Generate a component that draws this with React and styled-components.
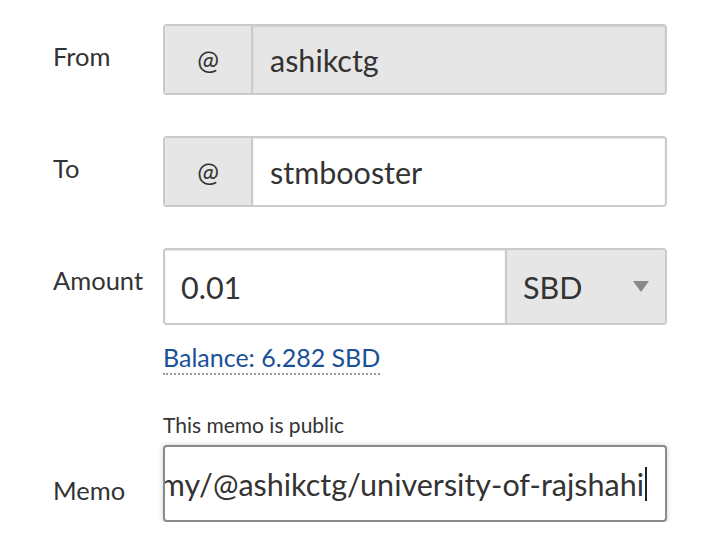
import React from "react";
import styled, { createGlobalStyle } from "styled-components";

const Global = createGlobalStyle`
  html, body { margin: 0; padding: 0; background: #fff; }
  body { font-family: "Lato", "Noto Sans", sans-serif; color: #333; }
`;

const Form = styled.div`
  padding: 24px 0 0 53px;
  width: 614px;
`;

const Row = styled.div`
  display: grid;
  grid-template-columns: 110px 504px;
  margin-bottom: ${(p) => p.$gap ?? 41}px;
`;

const Label = styled.div`
  font-size: 25.5px;
  line-height: 30px;
  padding-top: ${(p) => p.$top ?? 17}px;
  align-self: ${(p) => (p.$end ? "end" : "start")};
  padding-bottom: ${(p) => p.$bottom ?? 0}px;
`;

const Group = styled.div`
  display: flex;
  height: ${(p) => p.$h ?? 71}px;
  box-sizing: border-box;
  border: 2px solid #cacaca;
  border-radius: 4px;
  overflow: hidden;
`;

const Addon = styled.div`
  width: 86px;
  flex: none;
  background: #e6e6e6;
  border-right: 2px solid #cacaca;
  display: flex;
  align-items: center;
  justify-content: center;
  font-size: 26px;
  color: #333;
`;

const Field = styled.div`
  flex: 1;
  display: flex;
  align-items: center;
  padding-left: ${(p) => p.$pl ?? 17}px;
  background: ${(p) => (p.$disabled ? "#e6e6e6" : "#fff")};
  font-size: 30.5px;
  color: #333;
  box-shadow: inset 0 1px 2px rgba(10, 10, 10, 0.1);
`;

const Select = styled.div`
  width: 160px;
  flex: none;
  background: #e6e6e6;
  border-left: 2px solid #cacaca;
  display: flex;
  align-items: center;
  justify-content: space-between;
  padding: 0 16px 0 16px;
  box-sizing: border-box;
  font-size: 30.5px;
  color: #333;
`;

const Arrow = styled.span`
  width: 0;
  height: 0;
  border-left: 8px solid transparent;
  border-right: 8px solid transparent;
  border-top: 11px solid #8a8a8a;
`;

const Content = styled.div`
  display: flex;
  flex-direction: column;
  align-items: flex-start;
`;

const Balance = styled.a`
  margin-top: 16px;
  font-size: 25px;
  line-height: 32px;
  color: #1a5099;
  text-decoration: none;
  border-bottom: 2px dotted #999;
`;

const Hint = styled.div`
  font-size: 21px;
  line-height: 26px;
  color: #333;
  margin-top: -3px;
  margin-bottom: 7px;
`;

const MemoBox = styled.div`
  width: 504px;
  height: 77px;
  box-sizing: border-box;
  border: 2px solid #8a8a8a;
  border-radius: 4px;
  box-shadow: 0 0 5px #cacaca;
  display: flex;
  align-items: center;
  justify-content: flex-end;
  overflow: hidden;
  padding-right: 18px;
`;

const MemoText = styled.span`
  white-space: nowrap;
  font-size: 30.5px;
  color: #333;
  display: flex;
  align-items: center;
`;

const Caret = styled.span`
  display: inline-block;
  width: 2px;
  height: 34px;
  background: #222;
  margin-left: 1px;
`;

export default function App() {
  return (
    <>
      <Global />
      <Form>
        <Row>
          <Label>From</Label>
          <Group>
            <Addon>@</Addon>
            <Field $disabled>ashikctg</Field>
          </Group>
        </Row>
        <Row>
          <Label>To</Label>
          <Group>
            <Addon>@</Addon>
            <Field>stmbooster</Field>
          </Group>
        </Row>
        <Row $gap={40}>
          <Label>Amount</Label>
          <Content>
            <Group $h={77} style={{ width: "504px" }}>
              <Field $pl={16}>0.01</Field>
              <Select>
                SBD
                <Arrow />
              </Select>
            </Group>
            <Balance>Balance: 6.282 SBD</Balance>
          </Content>
        </Row>
        <Row $gap={0}>
          <Label $end $top={0} $bottom={17}>Memo</Label>
          <Content>
            <Hint>This memo is public</Hint>
            <MemoBox>
              <MemoText>
                https://steemit.com/economy/@ashikctg/university-of-rajshahi
                <Caret />
              </MemoText>
            </MemoBox>
          </Content>
        </Row>
      </Form>
    </>
  );
}
